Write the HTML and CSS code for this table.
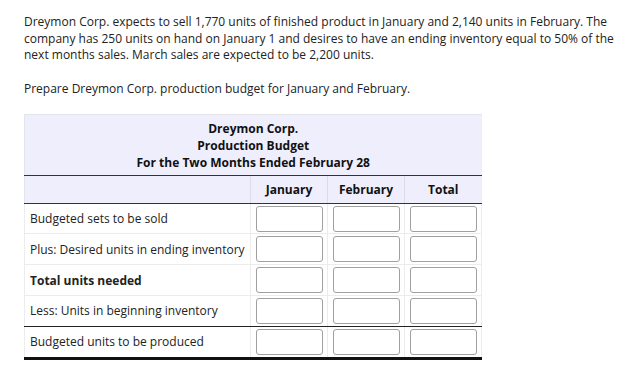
FILE: index.html
```html
<!DOCTYPE html>
<html>
<head>
<meta charset="utf-8">
<link rel="stylesheet" href="styles.css">
</head>
<body>
<div class="page">
  <p class="intro">Dreymon Corp. expects to sell 1,770 units of finished product in January and 2,140 units in February. The company has 250 units on hand on January 1 and desires to have an ending inventory equal to 50% of the next months sales. March sales are expected to be 2,200 units.</p>
  <p class="task">Prepare Dreymon Corp. production budget for January and February.</p>
  <table class="budget">
    <colgroup>
      <col class="c-label">
      <col class="c-jan">
      <col class="c-feb">
      <col class="c-tot">
    </colgroup>
    <thead>
      <tr class="title-row">
        <th colspan="4">Dreymon Corp.<br>Production Budget<br>For the Two Months Ended February 28</th>
      </tr>
      <tr class="col-row">
        <th class="label-col"></th>
        <th>January</th>
        <th>February</th>
        <th>Total</th>
      </tr>
    </thead>
    <tbody>
      <tr>
        <td class="label">Budgeted sets to be sold</td>
        <td><input class="box" type="text"></td>
        <td><input class="box" type="text"></td>
        <td><input class="box" type="text"></td>
      </tr>
      <tr>
        <td class="label">Plus: Desired units in ending inventory</td>
        <td><input class="box" type="text"></td>
        <td><input class="box" type="text"></td>
        <td><input class="box" type="text"></td>
      </tr>
      <tr>
        <td class="label bold">Total units needed</td>
        <td><input class="box" type="text"></td>
        <td><input class="box" type="text"></td>
        <td><input class="box" type="text"></td>
      </tr>
      <tr class="before-total">
        <td class="label">Less: Units in beginning inventory</td>
        <td><input class="box" type="text"></td>
        <td><input class="box" type="text"></td>
        <td><input class="box" type="text"></td>
      </tr>
      <tr class="final">
        <td class="label">Budgeted units to be produced</td>
        <td><input class="box" type="text"></td>
        <td><input class="box" type="text"></td>
        <td><input class="box" type="text"></td>
      </tr>
    </tbody>
  </table>
</div>
</body>
</html>
```

FILE: styles.css
```css
html, body {
  margin: 0;
  padding: 0;
  background: #fff;
}
body {
  font-family: "Open Sans", "Liberation Sans", sans-serif;
  font-size: 12px;
  color: #222;
}
.page {
  padding: 14px 0 0 24px;
  width: 598px;
}
.intro {
  margin: 0;
  line-height: 16.7px;
}
.task {
  margin: 17px 0 0;
  line-height: 16.5px;
}
.budget {
  margin-top: 16px;
  border-collapse: collapse;
  width: 457px;
  table-layout: fixed;
}
.c-label { width: 226px; }
.c-jan { width: 77px; }
.c-feb { width: 77px; }
.c-tot { width: 77px; }
.budget th {
  font-weight: 700;
  background: #eeeefd;
  color: #111;
}
.title-row th {
  text-align: center;
  line-height: 17px;
  padding: 5px 0 4px;
  border-top: 1px solid #e4e4ec;
  border-left: 1px solid #e4e4ec;
  border-bottom: 1px solid #333;
}
.col-row th {
  height: 27px;
  padding: 0;
  text-align: center;
  border-bottom: 1px solid #333;
  border-left: 1px solid #dcdce8;
}
.col-row th.label-col {
  border-left: 1px solid #e4e4ec;
}
.budget td {
  height: 29.8px;
  padding: 0;
  border-bottom: 1px solid #ececec;
  border-left: 1px solid #ececec;
  text-align: center;
  vertical-align: middle;
}
.budget td.label {
  text-align: left;
  padding-left: 5px;
  white-space: nowrap;
  color: #222;
}
.budget td.bold {
  font-weight: 700;
}
.budget td:last-child {
  border-right: 1px solid #ececec;
}
.before-total td {
  border-bottom: 1px solid #222;
}
.final td {
  border-bottom: 3px solid #111;
}
.box {
  display: block;
  margin: 0 auto;
  box-sizing: border-box;
  width: 67px;
  height: 26px;
  border: 1px solid #a0a0a0;
  border-radius: 3px;
  background: #fff;
  padding: 0;
  font: inherit;
}
```
